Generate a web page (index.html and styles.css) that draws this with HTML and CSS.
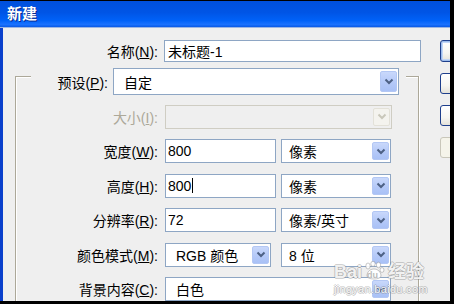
FILE: index.html
```html
<!DOCTYPE html>
<html lang="zh-CN">
<head>
    <meta charset="UTF-8">
    <title>新建</title>
    <link rel="stylesheet" href="styles.css">
</head>
<body>
    <div class="window">
        <div class="titlebar">新建</div>
        <div class="client">
            <div class="form">
                <div class="row name-row">
                    <div class="label">名称(<u>N</u>):</div>
                    <div class="field text name-field">未标题-1</div>
                </div>

                <div class="group">
                    <div class="preset-row">
                        <div class="label">预设(<u>P</u>):</div>
                        <div class="field combo preset-combo">
                            <span>自定</span>
                            <span class="arrow"><svg width="10" height="7" viewBox="0 0 10 7"><path d="M1.5 1.5 L5 5 L8.5 1.5" /></svg></span>
                        </div>
                    </div>

                    <div class="rows">
                        <div class="row disabled">
                            <div class="label">大小(<u>I</u>):</div>
                            <div class="field combo size-combo">
                                <span></span>
                                <span class="arrow"><svg width="10" height="7" viewBox="0 0 10 7"><path d="M1.5 1.5 L5 5 L8.5 1.5" /></svg></span>
                            </div>
                        </div>
                        <div class="row">
                            <div class="label">宽度(<u>W</u>):</div>
                            <div class="field text num-field">800</div>
                            <div class="field combo unit-combo">
                                <span>像素</span>
                                <span class="arrow"><svg width="10" height="7" viewBox="0 0 10 7"><path d="M1.5 1.5 L5 5 L8.5 1.5" /></svg></span>
                            </div>
                        </div>
                        <div class="row">
                            <div class="label">高度(<u>H</u>):</div>
                            <div class="field text num-field">800<span class="caret"></span></div>
                            <div class="field combo unit-combo">
                                <span>像素</span>
                                <span class="arrow"><svg width="10" height="7" viewBox="0 0 10 7"><path d="M1.5 1.5 L5 5 L8.5 1.5" /></svg></span>
                            </div>
                        </div>
                        <div class="row">
                            <div class="label">分辨率(<u>R</u>):</div>
                            <div class="field text num-field">72</div>
                            <div class="field combo unit-combo">
                                <span>像素/英寸</span>
                                <span class="arrow"><svg width="10" height="7" viewBox="0 0 10 7"><path d="M1.5 1.5 L5 5 L8.5 1.5" /></svg></span>
                            </div>
                        </div>
                        <div class="row">
                            <div class="label">颜色模式(<u>M</u>):</div>
                            <div class="field combo mode-combo">
                                <span class="clip">RGB 颜色</span>
                                <span class="arrow"><svg width="10" height="7" viewBox="0 0 10 7"><path d="M1.5 1.5 L5 5 L8.5 1.5" /></svg></span>
                            </div>
                            <div class="field combo unit-combo bit-combo">
                                <span>8 位</span>
                                <span class="arrow"><svg width="10" height="7" viewBox="0 0 10 7"><path d="M1.5 1.5 L5 5 L8.5 1.5" /></svg></span>
                            </div>
                        </div>
                        <div class="row">
                            <div class="label">背景内容(<u>C</u>):</div>
                            <div class="field combo bg-combo">
                                <span>白色</span>
                                <span class="arrow"><svg width="10" height="7" viewBox="0 0 10 7"><path d="M1.5 1.5 L5 5 L8.5 1.5" /></svg></span>
                            </div>
                        </div>
                    </div>
                </div>
            </div>

            <div class="buttons">
                <div class="btn default"></div>
                <div class="btn"></div>
                <div class="btn"></div>
                <div class="btn off"></div>
            </div>

            <!-- baidu jingyan watermark -->
            <div class="watermark">
                <div class="wm-logo">
                    <span>Bai</span>
                    <span class="paw">
                        <svg width="22" height="20" viewBox="0 0 22 20">
                            <ellipse cx="5" cy="5" rx="2.2" ry="3" />
                            <ellipse cx="10" cy="2.8" rx="2.2" ry="2.6" />
                            <ellipse cx="15.5" cy="4" rx="2.2" ry="2.8" />
                            <ellipse cx="19" cy="9" rx="2" ry="2.4" />
                            <path d="M4 15 C4 10 8 8 11 8 C15 8 18 11 18 15 C18 19 4 19 4 15 Z" />
                        </svg>
                        <span class="du">du</span>
                    </span>
                    <span>经验</span>
                </div>
                <div class="wm-url">jingyan.baidu.com</div>
            </div>
        </div>
    </div>
</body>
</html>
```

FILE: styles.css
```css
body {
    margin: 0;
    background: #000;
    font-family: "Liberation Sans", "Noto Sans CJK SC", sans-serif;
    color: #000;
}
.window {
    width: 450px;
    height: 300px;
    margin-top: 1px;
    display: flex;
    flex-direction: column;
    overflow: hidden;
}
.titlebar {
    flex: none;
    height: 27px;
    box-sizing: border-box;
    padding: 0 0 3px 7px;
    display: flex;
    align-items: center;
    background: linear-gradient(#0050dc, #0055e6 45%, #0062f8 75%, #1a72ff 90%, #0a5ae6);
    border-bottom: 1px solid #9db6e2;
    color: #fff;
    font-family: "Noto Sans CJK SC", sans-serif;
    font-size: 15px;
    font-weight: bold;
    text-shadow: 1px 1px 0 #0a2a90;
}
.client {
    flex: 1;
    display: flex;
    position: relative;
    background: #efefef;
    border-left: 3px solid #0a40cc;
}
.form {
    flex: none;
    width: 428px;
}
.row {
    display: flex;
    align-items: center;
    height: 24px;
}
.label {
    font-size: 14px;
    text-align: right;
    white-space: nowrap;
}
.name-row {
    height: 22px;
    margin-top: 12px;
}
.name-row .label {
    width: 155px;
    margin-right: 6px;
}
.field {
    height: 100%;
    box-sizing: border-box;
    border: 1px solid #8ea6c4;
    background: #fff;
    display: flex;
    align-items: center;
    font-size: 14px;
    white-space: nowrap;
}
.text {
    padding-left: 2px;
}
.name-field {
    width: 257px;
    padding-left: 3px;
}
.group {
    width: 404px;
    height: 300px;
    margin: 14px 0 0 12px;
    box-sizing: border-box;
    border: 1px solid #aca899;
    border-bottom: none;
    box-shadow: inset 1px 1px 0 #fff, 1px 0 0 #fff;
}
.preset-row {
    display: flex;
    align-items: center;
    width: 375px;
    height: 27px;
    margin: -9px 0 0 15px;
    background: #efefef;
}
.preset-row .label {
    width: 77px;
    margin-right: 5px;
}
.preset-combo {
    width: 286px;
    padding-left: 9px;
}
.rows {
    display: flex;
    flex-direction: column;
    gap: 10.5px;
    margin-top: 9.5px;
}
.rows .label {
    width: 142px;
    margin-right: 7px;
}
.combo {
    justify-content: space-between;
    padding-left: 10px;
    padding-right: 1px;
}
.arrow {
    flex: none;
    width: 17px;
    height: calc(100% - 4px);
    box-sizing: border-box;
    border: 1px solid #b3c7f4;
    border-radius: 2px;
    background: linear-gradient(#c9d8fb, #b3c8f8 60%, #a9c1f6);
    display: flex;
    align-items: center;
    justify-content: center;
}
.arrow path {
    fill: none;
    stroke: #4d6185;
    stroke-width: 2;
}
.size-combo {
    width: 227px;
}
.num-field {
    width: 111px;
    margin-right: 5px;
}
.unit-combo {
    width: 110px;
    padding-left: 7px;
}
.mode-combo {
    width: 106px;
    margin-right: 10px;
}
.clip {
    overflow: hidden;
    width: 68px;
}
.bg-combo {
    width: 226px;
}
.caret {
    display: inline-block;
    width: 1px;
    height: 15px;
    margin-left: 1px;
    background: #000;
}
.disabled .label {
    color: #aca899;
}
.disabled .field {
    background: #efefef;
    border-color: #cfcdc3;
}
.disabled .arrow {
    background: #f4f3ee;
    border-color: #e3e1d8;
}
.disabled .arrow path {
    stroke: #c9c7ba;
}
.buttons {
    flex: none;
    display: flex;
    flex-direction: column;
    gap: 11px;
    margin-left: 9px;
    padding-top: 12px;
}
.btn {
    width: 75px;
    height: 21px;
    box-sizing: border-box;
    border: 1px solid #1e3f8c;
    border-radius: 3px;
    background: linear-gradient(#ffffff, #f6f6f2 60%, #e4e2da);
}
.btn.default {
    height: 22px;
    box-shadow: inset 0 0 0 1px #9cbcec, inset 0 0 0 2px #c2d6f6;
}
.btn.off {
    border-color: #c9c7ba;
    background: #f5f4ea;
}
.watermark {
    position: absolute;
    left: 331px;
    top: 231px;
    color: rgba(255, 255, 255, 0.9);
    text-shadow: 1px 0 0 rgba(120, 120, 120, 0.35), -1px 0 0 rgba(120, 120, 120, 0.35),
                 0 1px 0 rgba(120, 120, 120, 0.35), 0 -1px 0 rgba(120, 120, 120, 0.35);
}
.wm-logo {
    display: flex;
    align-items: flex-end;
    height: 22px;
    font-size: 18px;
    font-weight: bold;
    line-height: 18px;
}
.paw {
    position: relative;
    width: 22px;
    height: 20px;
    margin: 0 3px 0 1px;
}
.paw svg {
    fill: rgba(255, 255, 255, 0.9);
    stroke: rgba(120, 120, 120, 0.4);
    stroke-width: 1;
}
.paw .du {
    position: absolute;
    left: 4px;
    bottom: 1px;
    font-size: 9px;
    line-height: 9px;
    color: rgba(170, 170, 170, 0.8);
    text-shadow: none;
}
.wm-url {
    font-size: 11px;
    line-height: 12px;
    margin-top: 2px;
    letter-spacing: 0.3px;
}
```
